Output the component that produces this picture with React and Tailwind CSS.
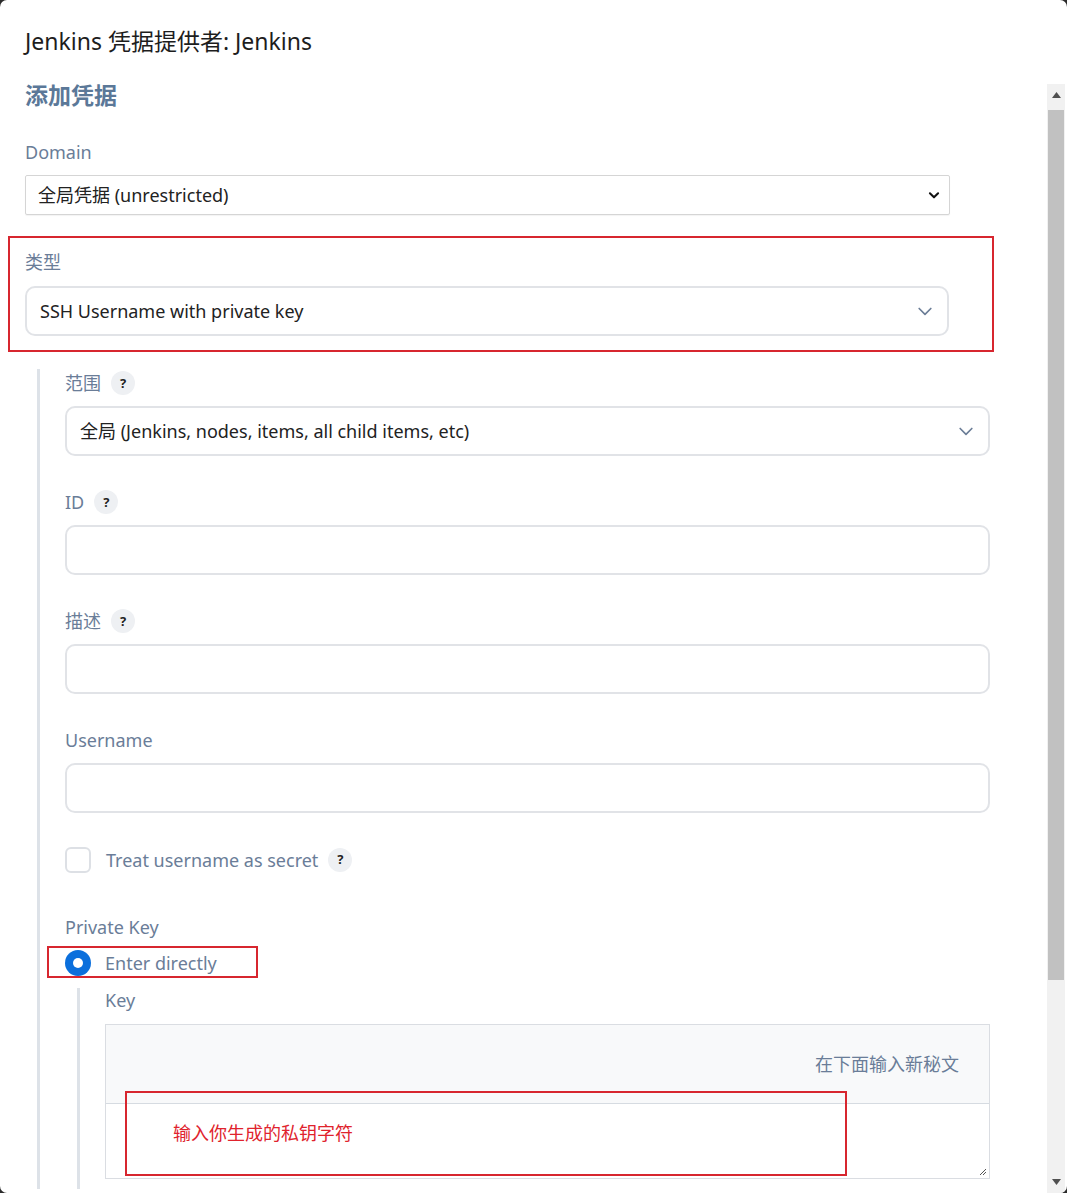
import React from 'react';

const font = { fontFamily: '"Noto Sans", "Noto Sans CJK SC", sans-serif' };

function Help() {
  return (
    <span className="ml-[10px] inline-flex h-[24px] w-[24px] items-center justify-center rounded-full bg-[#eef0f3] text-[13px] font-bold text-[#222]">
      ?
    </span>
  );
}

function Chevron({ color = '#6b7d97' }) {
  return (
    <svg width="20" height="20" viewBox="0 0 24 24" fill="none" stroke={color} strokeWidth="2" strokeLinecap="round" strokeLinejoin="round">
      <path d="M5 9l7 7 7-7" />
    </svg>
  );
}

function Label({ children, help }) {
  return (
    <div className="flex h-[24px] items-center text-[18px] leading-[24px] text-[#6a7d98]">
      <span>{children}</span>
      {help && <Help />}
    </div>
  );
}

function TextInput() {
  return <div className="h-[50px] w-full rounded-[10px] border-2 border-[#e1e3e7] bg-white" />;
}

function FancySelect({ text }) {
  return (
    <div className="flex h-[50px] w-full items-center justify-between rounded-[10px] border-2 border-[#e1e3e7] bg-white pl-[13px] pr-[12px] text-[18px] text-[#222]">
      <span>{text}</span>
      <Chevron />
    </div>
  );
}

export default function App() {
  return (
    <div className="h-[1193px] w-[1067px] bg-[#2b2b2b]" style={font}>
      <div className="flex h-full w-full flex-col overflow-hidden rounded-[7px] bg-white">
        {/* header */}
        <div className="h-[80px] shrink-0 pl-[25px] pt-[27px] text-[23px] leading-[28px] text-[#1d1d1d]">
          Jenkins 凭据提供者: Jenkins
        </div>

        <div className="flex min-h-0 flex-1">
          {/* scroll content */}
          <div className="relative min-w-0 flex-1 overflow-hidden pl-[25px]">
            <div className="w-[965px]">
              <div className="text-[23px] font-bold leading-[30px] text-[#5b7898]">添加凭据</div>

              <div className="mt-[30px]">
                <Label>Domain</Label>
              </div>
              <div className="mt-[11px] flex h-[40px] w-[925px] items-center justify-between rounded-[2px] border border-[#d5d5d5] bg-white pl-[12px] pr-[8px] text-[18px] text-[#222] shadow-[0_1px_1px_rgba(0,0,0,0.05)]">
                <span>全局凭据 (unrestricted)</span>
                <svg width="14" height="14" viewBox="0 0 24 24" fill="none" stroke="#111" strokeWidth="3.5" strokeLinecap="round" strokeLinejoin="round">
                  <path d="M5 9l7 7 7-7" />
                </svg>
              </div>

              {/* type */}
              <div className="relative mt-[35px]">
                <div className="pointer-events-none absolute left-[-17px] top-[-14px] h-[116px] w-[986px] border-2 border-[#d7262f]" />
                <Label>类型</Label>
                <div className="mt-[12px] w-[924px]">
                  <FancySelect text="SSH Username with private key" />
                </div>
              </div>

              {/* nested */}
              <div className="ml-[12px] mt-[33px] border-l-[3px] border-[#dde2e8] pl-[25px] pt-[2px]">
                <Label help>范围</Label>
                <div className="mt-[11px]">
                  <FancySelect text="全局 (Jenkins, nodes, items, all child items, etc)" />
                </div>

                <div className="mt-[34px]">
                  <Label help>ID</Label>
                </div>
                <div className="mt-[11px]">
                  <TextInput />
                </div>

                <div className="mt-[34px]">
                  <Label help>描述</Label>
                </div>
                <div className="mt-[11px]">
                  <TextInput />
                </div>

                <div className="mt-[34px]">
                  <Label>Username</Label>
                </div>
                <div className="mt-[11px]">
                  <TextInput />
                </div>

                <div className="mt-[34px] flex h-[26px] items-center">
                  <span className="h-[26px] w-[26px] rounded-[6px] border-2 border-[#dde0e5] bg-white" />
                  <span className="ml-[15px] text-[18px] text-[#6a7d98]">Treat username as secret</span>
                  <Help />
                </div>

                <div className="mt-[42px]">
                  <Label>Private Key</Label>
                </div>

                <div className="relative mt-[11px] flex h-[26px] items-center">
                  <div className="pointer-events-none absolute left-[-18px] top-[-4px] h-[32px] w-[211px] border-2 border-[#d7262f]" />
                  <span className="flex h-[26px] w-[26px] items-center justify-center rounded-full bg-[#0b6fdc]">
                    <span className="h-[10px] w-[10px] rounded-full bg-white" />
                  </span>
                  <span className="ml-[14px] text-[18px] text-[#6a7d98]">Enter directly</span>
                </div>

                <div className="ml-[12px] mt-[12px] border-l-[3px] border-[#dde2e8] pb-[10px] pl-[25px]">
                  <Label>Key</Label>
                  <div className="mt-[12px] border border-[#dadde2]">
                    <div className="flex h-[78px] items-center justify-end bg-[#f8f9fa] pr-[30px] text-[18px] text-[#6a7d98]">
                      在下面输入新秘文
                    </div>
                    <div className="relative h-[75px] border-t border-[#d6dbe1] bg-white">
                      <div className="absolute left-[19px] top-[-13px] flex h-[85px] w-[722px] items-center border-2 border-[#d7262f] pl-[46px] text-[18px] text-[#e0232d]">
                        输入你生成的私钥字符
                      </div>
                      <svg className="absolute bottom-[2px] right-[2px]" width="10" height="10" viewBox="0 0 10 10" stroke="#555" strokeWidth="1">
                        <path d="M9 3L3 9M9 6L6 9" />
                      </svg>
                    </div>
                  </div>
                </div>
              </div>
            </div>
          </div>

          {/* scrollbar */}
          <div className="mr-[2px] mt-[4px] flex w-[18px] shrink-0 flex-col bg-[#f1f1f1]">
            <div className="flex h-[22px] items-center justify-center">
              <svg width="9" height="6" viewBox="0 0 9 6"><path d="M4.5 0L9 6H0z" fill="#505050" /></svg>
            </div>
            <div className="mx-[1px] mt-[4px] h-[870px] bg-[#c1c1c1]" />
            <div className="flex-1" />
            <div className="flex h-[22px] items-center justify-center">
              <svg width="9" height="6" viewBox="0 0 9 6"><path d="M0 0H9L4.5 6z" fill="#505050" /></svg>
            </div>
          </div>
        </div>
      </div>
    </div>
  );
}
